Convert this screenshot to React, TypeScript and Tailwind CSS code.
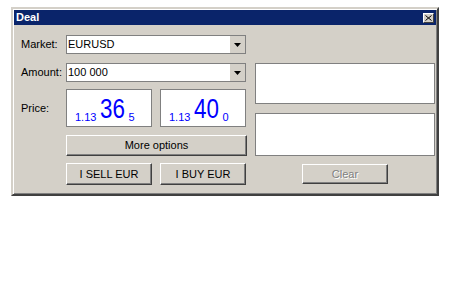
import { ChevronDown } from "lucide-react";

const font = { fontFamily: '"Liberation Sans", Arial, sans-serif' };

function Select({ value }: { value: string }) {
  return (
    <div className="flex h-[19px] w-[180px] border border-[#808080] bg-white">
      <span className="flex-1 pl-[1px] text-[11px] leading-[17px] text-black">{value}</span>
      <span className="flex w-[15px] items-center justify-center bg-[#d4d0c8]">
        <svg width="7" height="4" viewBox="0 0 7 4">
          <path d="M0 0h7L3.5 4z" fill="#000" />
        </svg>
      </span>
    </div>
  );
}

function Price({ pre, big, post }: { pre: string; big: string; post: string }) {
  return (
    <div className="flex h-[38px] items-end border border-[#808080] bg-white pb-[3px] pl-[8px] text-[#0000ff]">
      <span className="text-[11px] leading-none">{pre}</span>
      <span className="ml-[4px] w-[25px] text-[28px] leading-none">
        <span className="inline-block origin-left scale-x-[0.8]">{big}</span>
      </span>
      <span className="ml-[3px] text-[11px] leading-none">{post}</span>
    </div>
  );
}

function Button({ label, disabled, className = "" }: { label: string; disabled?: boolean; className?: string }) {
  return (
    <div
      className={`flex items-center justify-center border border-t-white border-l-white border-r-[#404040] border-b-[#404040] bg-[#d4d0c8] text-[11px] shadow-[inset_-1px_-1px_#808080] ${
        disabled ? "text-[#808080] [text-shadow:1px_1px_#fff]" : "text-black"
      } ${className}`}
    >
      {label}
    </div>
  );
}

export default function App() {
  return (
    <div className="min-h-[300px] bg-white pl-[11px] pt-[7px]" style={font}>
      <div className="flex h-[189px] w-[428px] flex-col border-2 border-t-[#d4d0c8] border-l-[#d4d0c8] border-r-[#404040] border-b-[#404040] bg-[#d4d0c8] shadow-[inset_1px_1px_#fff,inset_-1px_-1px_#808080]">
        <div className="mx-px mt-px flex h-[15px] items-center justify-between bg-[#0a246a] pl-[2px] pr-[2px]">
          <span className="text-[11px] font-bold text-white">Deal</span>
          <span className="flex h-[10px] w-[11px] items-center justify-center border border-t-white border-l-white border-r-[#404040] border-b-[#404040] bg-[#d4d0c8]">
            <svg width="7" height="6" viewBox="0 0 7 6">
              <path d="M0.5 0.5l6 5M6.5 0.5l-6 5" stroke="#000" strokeWidth="1" />
            </svg>
          </span>
        </div>

        <div className="flex pl-[8px] pt-[10px]">
          <div className="flex flex-col">
            <div className="flex items-center">
              <span className="w-[45px] text-[11px] text-black">Market:</span>
              <Select value="EURUSD" />
            </div>
            <div className="mt-[9px] flex items-center">
              <span className="w-[45px] text-[11px] text-black">Amount:</span>
              <Select value="100 000" />
            </div>
            <div className="mt-[7px] flex items-center">
              <span className="w-[45px] text-[11px] text-black">Price:</span>
              <div className="grid w-[180px] grid-cols-2 gap-[8px]">
                <Price pre="1.13" big="36" post="5" />
                <Price pre="1.13" big="40" post="0" />
              </div>
            </div>
            <div className="mt-[8px] flex">
              <span className="w-[45px]" />
              <Button label="More options" className="h-[21px] w-[181px]" />
            </div>
            <div className="mt-[7px] flex">
              <span className="w-[45px]" />
              <div className="grid w-[180px] grid-cols-2 gap-[8px]">
                <Button label="I SELL EUR" className="h-[22px]" />
                <Button label="I BUY EUR" className="h-[22px]" />
              </div>
            </div>
          </div>

          <div className="ml-[8px] mt-[28px] flex w-[180px] flex-col items-center">
            <div className="h-[41px] w-full border border-[#808080] bg-white" />
            <div className="mt-[9px] h-[43px] w-full border border-[#808080] bg-white" />
            <Button label="Clear" disabled className="mt-[8px] h-[20px] w-[86px]" />
          </div>
        </div>
      </div>
    </div>
  );
}
